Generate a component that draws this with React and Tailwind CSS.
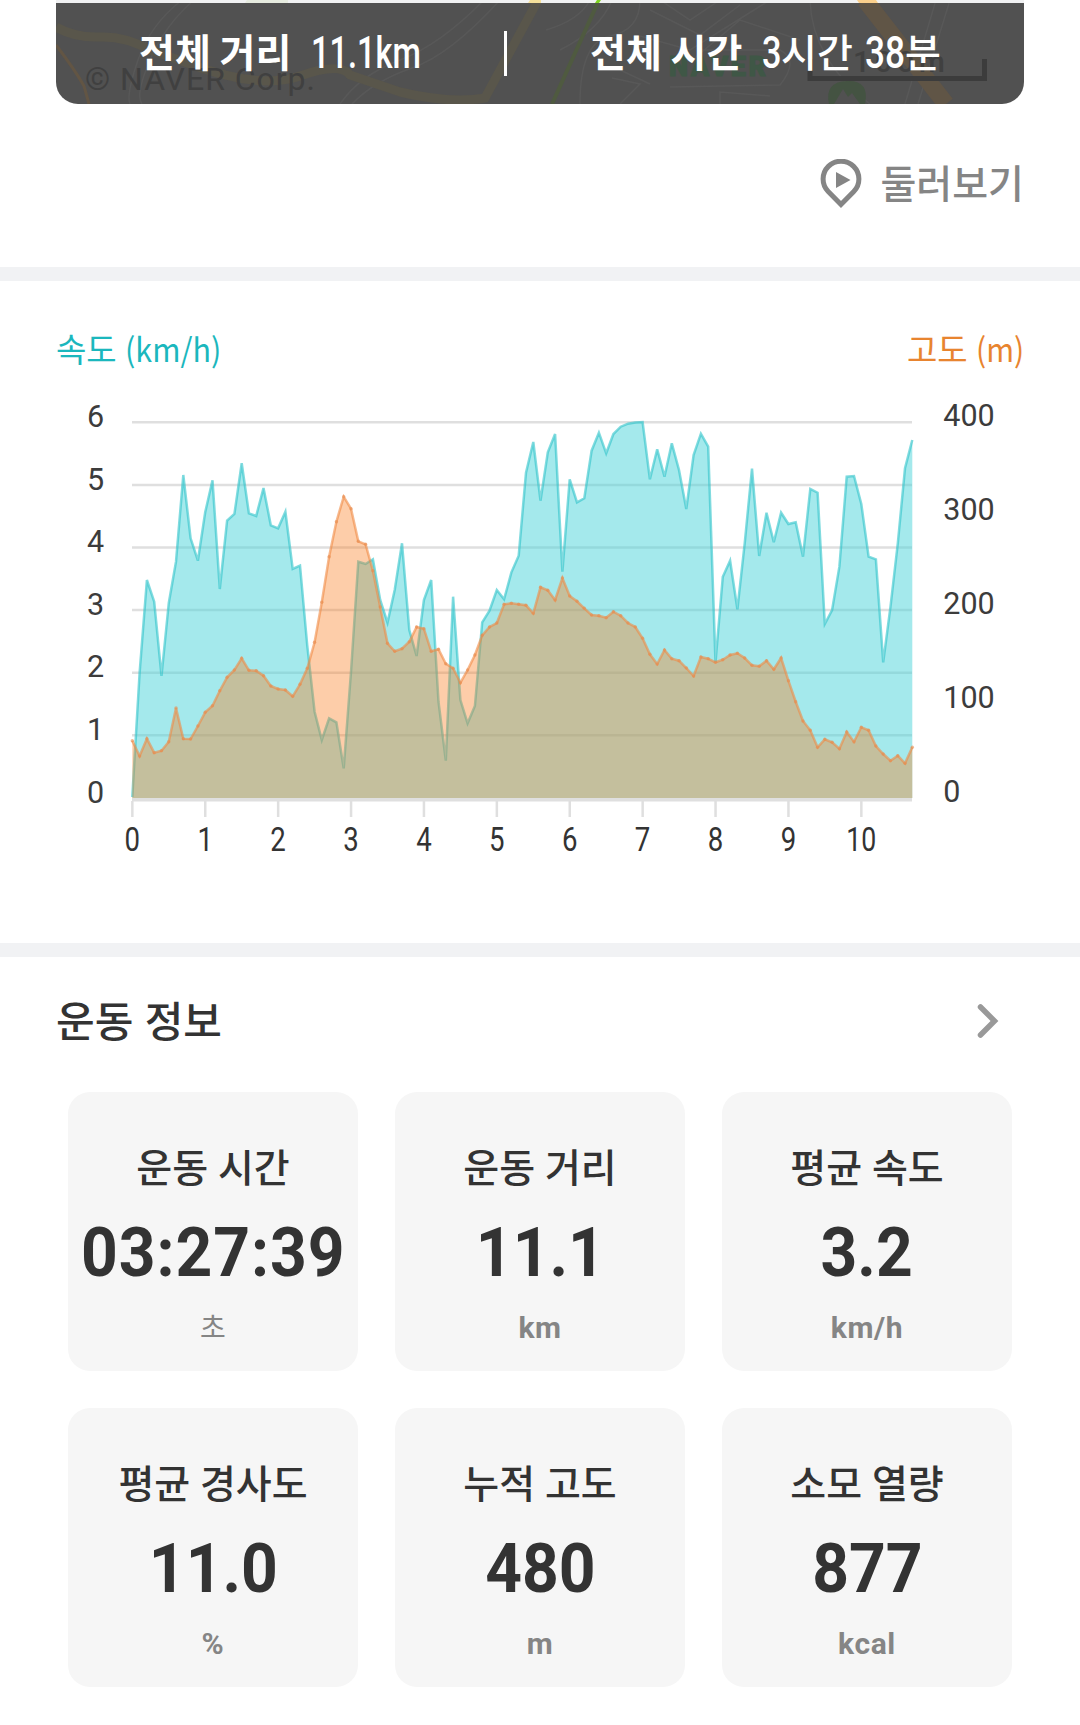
import React from 'react'

// one sample every 0.1km, already projected to the y axis of the chart
const speedPoints = [
    797, 673, 580, 601.7, 676, 603, 561.7, 475, 538.3, 560.7,
    512.3, 480.3, 589, 520.7, 514, 463.3, 513.3, 516, 488, 525.3,
    528.3, 511.7, 569, 565.7, 646, 711.7, 740, 718.3, 722.3, 768.3,
    672, 561.7, 564, 559.3, 600, 622.7, 590, 543.3, 630, 656,
    600, 580, 701.7, 760.7, 596.7, 700, 723.3, 706, 622.3, 610.7,
    590, 599.3, 572.3, 555.7, 472.7, 442, 500.7, 452.3, 434, 571.7,
    479.3, 502.3, 498.3, 450.7, 432.7, 453.3, 434, 426.7, 423.7, 422.6,
    422, 479.3, 449.3, 476.7, 443.3, 470, 509, 455, 433.7, 446.7,
    662.3, 576.7, 560.7, 609.3, 543.3, 468.7, 556, 512.7, 542.3, 512.7,
    524, 522.3, 556.7, 489, 492.7, 624, 610, 566.7, 476.7, 476,
    504, 556.7, 559.3, 662.3, 606.7, 543.3, 468.3, 440,
]

const altitudePoints = [
    740.7, 756, 738.7, 752.7, 750.7, 741.7, 708, 738.7, 739, 726,
    712.3, 705.7, 690.7, 677.3, 670, 658.3, 670.3, 670.7, 675.7, 686,
    689, 690, 696.3, 684.3, 668.3, 642.3, 602.3, 556.7, 521.7, 496.7,
    508.7, 541.3, 544.3, 570.7, 607, 643.3, 651.3, 648.7, 641.7, 627,
    628.7, 651.3, 649.3, 663.7, 668.3, 682.7, 670, 655, 635.3, 627,
    623, 604.3, 603.3, 604.3, 605.3, 613.3, 587.3, 590.3, 600, 578,
    596, 601.3, 608.3, 615, 615.7, 617.7, 611.7, 615.7, 623, 627,
    638.3, 654.3, 664, 650, 658.7, 660.7, 668, 676, 657, 658.7,
    662.3, 659.7, 655, 653.3, 658, 665.3, 666.3, 660.7, 669.3, 658,
    680.7, 701.7, 721, 730.3, 747.3, 739.3, 742.3, 748.7, 732, 741.7,
    727.3, 730.3, 746, 754, 760.7, 755.7, 763.3, 747.3,
]

const X0 = 132.3
const STEP = 7.29
const BASE = 798

const toLine = (points) => points.map((y, i) => `${(X0 + i * STEP).toFixed(1)},${y}`).join(' ')
const toArea = (points) => `${X0},${BASE} ${toLine(points)} ${(X0 + (points.length - 1) * STEP).toFixed(1)},${BASE}`

const stats = [
    { name: '운동 시간', value: '03:27:39', unit: '초' },
    { name: '운동 거리', value: '11.1', unit: 'km' },
    { name: '평균 속도', value: '3.2', unit: 'km/h' },
    { name: '평균 경사도', value: '11.0', unit: '%' },
    { name: '누적 고도', value: '480', unit: 'm' },
    { name: '소모 열량', value: '877', unit: 'kcal' },
]

const MapBackground = () => (
    <svg className="absolute inset-0" width="968" height="104" viewBox="56 0 968 104" fill="none">
        <rect x="56" y="0" width="968" height="104" fill="#515151" />
        <g stroke="#585858" strokeWidth="1.500">
            <path d="M182 0Q150 25 138 60T130 104M194 0Q165 25 150 60T142 104" />
            <path d="M484 0Q440 45 400 60T340 104M500 0Q450 55 412 68T352 104" />
            <path d="M546 30Q580 20 590 0M560 50Q600 30 612 0M640 0Q640 30 610 36T580 104M650 10L700 35L740 5M660 0L690 20L720 0" />
            <path d="M770 0L690 50L640 36M800 40L740 20L690 62M810 0Q812 60 870 104M612 78L640 84L620 104M670 87L780 85Q800 60 780 50H700" />
            <path d="M936 0L905 104M950 0L918 104M620 70L650 84M720 104V92L770 96" />
        </g>
        <g stroke="#59564b" strokeWidth="9">
            <path d="M56 27Q75 38 100 37T150 50L190 64Q260 90 300 76T350 75L400 92Q450 104 485 98L538 0" />
        </g>
        <path d="M56 45Q75 70 84 86L89 104" stroke="#625544" strokeWidth="3" />
        <path d="M599 0L552 104" stroke="#4f5a40" strokeWidth="4" />
        <path d="M865 0L946 104" stroke="#605546" strokeWidth="17" />
        <path d="M829 104Q824 82 847 81T865 104H860L852 93L848 97L843 89L834 104Z" fill="#445342" />
        <path d="M810 59V78.500H984.500V59" stroke="#3c3c3c" strokeWidth="5" />
        <g fontFamily="Roboto, sans-serif">
            <text x="85" y="90" fontSize="32" textLength="230" fill="#404040">© NAVER Corp.</text>
            <text x="669" y="75.500" fontSize="27" fontWeight="900" textLength="97" fill="#3f5746" stroke="#3f5746">NAVER</text>
            <text x="853" y="72" fontSize="30" fontWeight="500" textLength="92" fill="#404040">100m</text>
        </g>
        {/* uncovered strip of the map */}
        <rect x="56" y="0" width="968" height="3" fill="#f0f1f2" />
        <path d="M247 0H288V3H245Z" fill="#e6ebdf" />
        <path d="M530 0H541V3H528Z" fill="#f5e09a" />
        <path d="M597 0H601L599 3H595Z" fill="#7ed321" />
        <path d="M857 0H876L878 3H859Z" fill="#fbd08c" />
    </svg>
)

const Summary = () => (
    <div className="relative mx-14 h-[104px] overflow-hidden rounded-b-[22px]">
        <MapBackground />
        <div className="relative flex h-full items-center pt-[2px] text-[39px] leading-none text-white">
            <div className="mb-[5px] ml-[83px] w-[172px] whitespace-nowrap font-bold">전체 거리</div>
            <div className="w-[110px] whitespace-nowrap">
                <span className="inline-block origin-left scale-x-[0.74] font-[Roboto] text-[44px] font-medium">11.1km</span>
            </div>
            <div className="ml-[83px] h-[45px] w-[3px] bg-white"></div>
            <div className="mb-[5px] ml-[83px] w-[172px] whitespace-nowrap font-bold">전체 시간</div>
            <div className="flex whitespace-nowrap font-medium">
                <span className="w-[19px]"><span className="inline-block origin-left scale-x-[0.78] font-[Roboto] text-[44px]">3</span></span>
                <span className="w-[84px]">시간</span>
                <span className="w-[40px]"><span className="inline-block origin-left scale-x-[0.8] font-[Roboto] text-[44px]">38</span></span>
                <span>분</span>
            </div>
        </div>
    </div>
)

const PinPlayIcon = () => (
    <svg width="42" height="50" viewBox="0 0 42 50">
        <path d="M21 45.500L8.200 32.600A17.900 17.900 0 1 1 33.800 32.600Z" fill="none" stroke="#858585" strokeWidth="5" />
        <path d="M16 13L30.500 21L16 29Z" fill="#858585" />
    </svg>
)

const Chart = () => (
    <svg className="block" width="1080" height="480" viewBox="0 390 1080 480">
        {[0, 1, 2, 3, 4, 5].map((i) => (
            <line key={i} x1="132" x2="912" y1={422.3 + i * 62.6} y2={422.3 + i * 62.6} stroke="#dfdfdf" strokeWidth="2.500" />
        ))}
        <polygon points={toArea(speedPoints)} fill="#49d3d9" fillOpacity="0.5" />
        <polyline points={toLine(speedPoints)} fill="none" stroke="#2fc3ca" strokeOpacity="0.6" strokeWidth="2.500" />
        <polygon points={toArea(altitudePoints)} fill="#fb7c1c" fillOpacity="0.38" />
        <polyline points={toLine(altitudePoints)} fill="none" stroke="#f08a45" strokeOpacity="0.6" strokeWidth="2.500" />
        {altitudePoints.map((y, i) => (
            <circle key={i} cx={X0 + i * STEP} cy={y} r="1.700" fill="#e88a4c" fillOpacity="0.6" />
        ))}
        <rect x="132" y="798" width="780" height="3.500" fill="#dfdfdf" />
        {[0, 1, 2, 3, 4, 5, 6, 7, 8, 9, 10].map((km) => (
            <g key={km}>
                <rect x={X0 - 1.2 + km * 72.9} y="801" width="2.500" height="16" fill="#dfdfdf" />
                <text
                    x={X0 + km * 72.9}
                    y="850.500"
                    textAnchor="middle"
                    textLength={km > 9 ? 30 : 15.5}
                    lengthAdjust="spacingAndGlyphs"
                    fontFamily="Roboto, sans-serif"
                    fontSize="33"
                    fill="#333333"
                >
                    {km}
                </text>
            </g>
        ))}
        <g fontFamily="Roboto, sans-serif" fontSize="30.500" fill="#3c3c3c">
            {[6, 5, 4, 3, 2, 1, 0].map((v, i) => (
                <text key={v} x="87" y={427 + i * 62.6}>{v}</text>
            ))}
            {[400, 300, 200, 100, 0].map((v, i) => (
                <text key={v} x="943.300" y={425.9 + i * 94}>{v}</text>
            ))}
        </g>
    </svg>
)

const StatCard = ({ name, value, unit }) => (
    <div className="flex h-[279px] flex-col items-center rounded-[22px] bg-[#f6f6f6] pt-[54px] leading-none text-[#333333]">
        <div className="h-[72px] whitespace-nowrap text-[39px] font-medium [word-spacing:1px]">{name}</div>
        <div className={`h-[95px] scale-x-[0.93] whitespace-nowrap font-[Roboto] text-[69px] font-bold ${value.includes(':') ? 'tracking-[1px]' : ''}`}>
            {value}
        </div>
        {unit === '초'
            ? <div className="-mt-px text-[28px] text-[#858585]">{unit}</div>
            : <div className="font-[Roboto] text-[30px] font-bold tracking-[0.6px] text-[#858585]">{unit}</div>}
    </div>
)

const App = () => {
    return (
        <div className="h-[1725px] w-[1080px] overflow-hidden bg-white font-['Noto_Sans_CJK_KR',sans-serif]">
            <Summary />
            <div className="flex h-[163px] items-start justify-end pr-14 pt-[55px]">
                <PinPlayIcon />
                <span className="ml-[18px] mt-[3px] text-[39px] font-medium leading-none text-[#858585]">둘러보기</span>
            </div>
            <div className="h-[14px] bg-[#f1f2f4]"></div>

            <div className="h-[662px] pt-[51px]">
                <div className="flex h-[58px] justify-between px-14 text-[33px] leading-none">
                    <div className="flex w-[165px] whitespace-nowrap text-[#1bb7bd]">
                        <span>속도</span>
                        <span className="ml-[8px] inline-block origin-left scale-x-[0.925]">(km/h)</span>
                    </div>
                    <div className="flex w-[117px] whitespace-nowrap text-[#e8842f]">
                        <span>고도</span>
                        <span className="ml-[8px] inline-block origin-left scale-x-[0.91]">(m)</span>
                    </div>
                </div>
                <Chart />
            </div>
            <div className="h-[14px] bg-[#f1f2f4]"></div>

            <div className="flex h-[135px] items-start justify-between pl-14 pr-[80px] pt-[41px]">
                <h3 className="text-[42px] font-medium leading-none text-[#333333] [word-spacing:2px]">운동 정보</h3>
                <svg className="mt-[5px]" width="24" height="36" viewBox="0 0 24 36">
                    <path d="M4.500 4L18.500 18L4.500 32" fill="none" stroke="#999999" strokeWidth="5.500" strokeLinecap="round" />
                </svg>
            </div>
            <div className="grid grid-cols-3 gap-[37px] px-[68px]">
                {stats.map((s) => (
                    <StatCard key={s.name} {...s} />
                ))}
            </div>
        </div>
    )
}

export default App;
